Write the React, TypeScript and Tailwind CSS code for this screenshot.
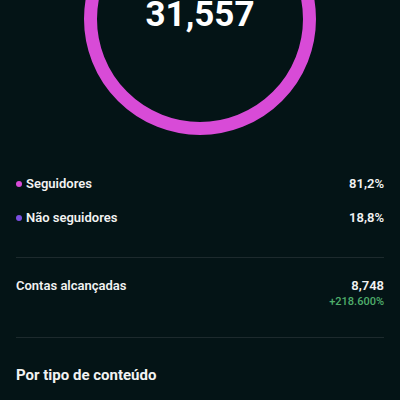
import React from "react";

export default function App() {
  return (
    <div
      className="w-[400px] h-[400px] overflow-hidden bg-[#041416] text-[#f2f2f2]"
      style={{ fontFamily: "Roboto, 'Noto Sans', sans-serif" }}
    >
      <div className="h-[135px] flex justify-center items-end">
        <div className="w-[232px] h-[232px] shrink-0 rounded-full border-[13px] border-[#d84bd7] flex flex-col items-center pt-[81px]">
          <div className="text-[35px] leading-[35px] font-bold text-white">31,557</div>
        </div>
      </div>

      <div className="px-4">
        <div className="mt-[39px] flex flex-col gap-[14px]">
          <div className="flex items-center justify-between h-[20px]">
            <div className="flex items-center gap-[4px]">
              <span className="w-[6px] h-[6px] rounded-full bg-[#d84bd7]" />
              <span className="text-[13px] font-semibold">Seguidores</span>
            </div>
            <span className="text-[13px] font-semibold">81,2%</span>
          </div>
          <div className="flex items-center justify-between h-[20px]">
            <div className="flex items-center gap-[4px]">
              <span className="w-[6px] h-[6px] rounded-full bg-[#7b4fe0]" />
              <span className="text-[13px] font-semibold">Não seguidores</span>
            </div>
            <span className="text-[13px] font-semibold">18,8%</span>
          </div>
        </div>

        <div className="mt-[29px] h-px bg-[#1d2a2d]" />

        <div className="mt-[19px] flex justify-between">
          <span className="text-[13px] leading-[18px] font-semibold">Contas alcançadas</span>
          <div className="flex flex-col items-end">
            <span className="text-[13px] leading-[18px] font-semibold">8,748</span>
            <span className="text-[11px] leading-[14px] font-medium text-[#4fae6b]">+218.600%</span>
          </div>
        </div>

        <div className="mt-[28px] h-px bg-[#1d2a2d]" />

        <div className="mt-[27px] text-[15px] leading-[20px] font-bold">Por tipo de conteúdo</div>
      </div>
    </div>
  );
}
